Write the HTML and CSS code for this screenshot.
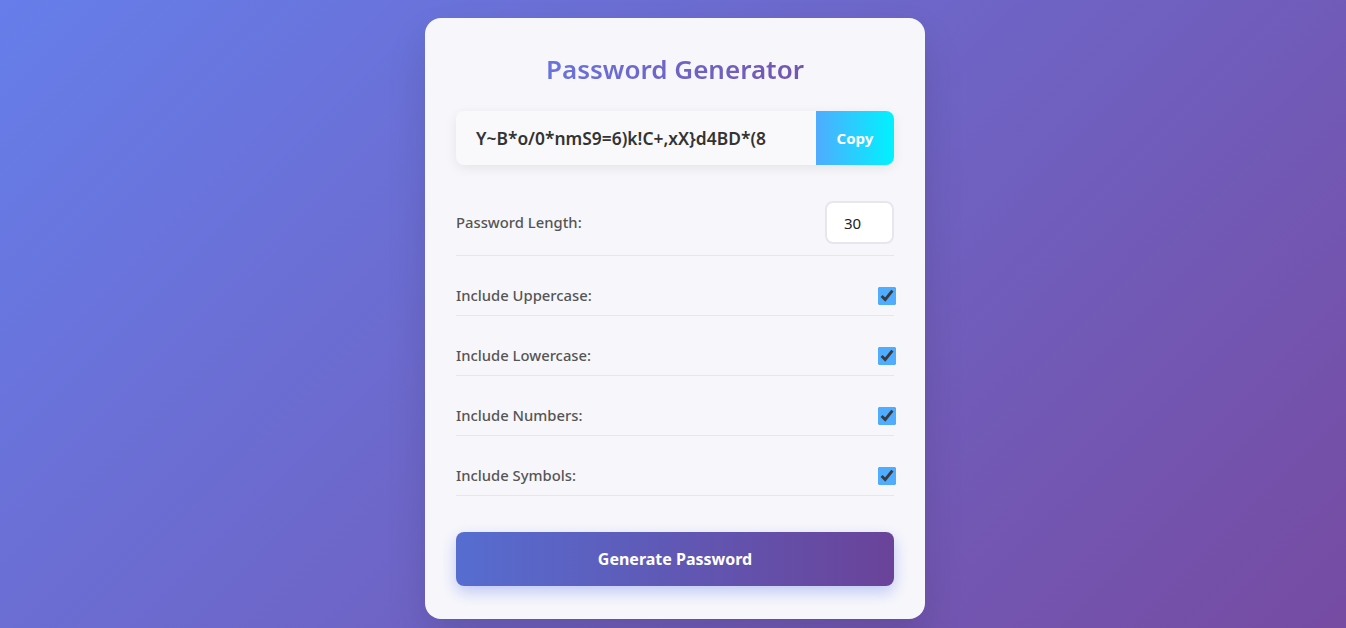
FILE: index.html
```html
<!DOCTYPE html>
<html lang="en">
<head>
<meta charset="utf-8">
<title>Password Generator</title>
<link rel="stylesheet" href="styles.css">
</head>
<body>
<div class="page">
  <div class="card">
    <h1 class="title">Password Generator</h1>
    <div class="result">
      <span class="result-text">Y~B*o/0*nmS9=6)k!C+,xX}d4BD*(8</span>
      <button class="copy-btn">Copy</button>
    </div>
    <div class="settings">
      <div class="row row-length">
        <label class="label">Password Length:</label>
        <input class="length-input" type="number" value="30">
      </div>
      <div class="row">
        <label class="label">Include Uppercase:</label>
        <input class="check" type="checkbox" checked>
      </div>
      <div class="row">
        <label class="label">Include Lowercase:</label>
        <input class="check" type="checkbox" checked>
      </div>
      <div class="row">
        <label class="label">Include Numbers:</label>
        <input class="check" type="checkbox" checked>
      </div>
      <div class="row">
        <label class="label">Include Symbols:</label>
        <input class="check" type="checkbox" checked>
      </div>
    </div>
    <button class="generate-btn">Generate Password</button>
  </div>
</div>
</body>
</html>
```

FILE: styles.css
```css
* { box-sizing: border-box; }
html, body { margin: 0; height: 100%; }
body {
  font-family: "Noto Sans", "Open Sans", sans-serif;
  background: linear-gradient(135deg, #667eea 0%, #764ba2 100%);
  overflow: hidden;
}
.page {
  display: flex;
  justify-content: center;
  padding: 18px 0 0 4px;
}
.card {
  width: 500px;
  background: #f7f7fb;
  border-radius: 16px;
  padding: 30px 31px 33px;
  box-shadow: 0 20px 40px rgba(0, 0, 0, 0.12);
  display: flex;
  flex-direction: column;
}
.title {
  margin: 0 0 19px;
  text-align: center;
  font-size: 26px;
  line-height: 42px;
  padding-bottom: 2px;
  font-weight: 600;
  color: #6a66d0;
  background: linear-gradient(90deg, #667eea, #764ba2);
  -webkit-background-clip: text;
  background-clip: text;
  -webkit-text-fill-color: transparent;
}
.result {
  display: flex;
  align-items: stretch;
  height: 54px;
  flex-shrink: 0;
  background: #f9f9fb;
  border-radius: 8px;
  box-shadow: 0 3px 12px rgba(0, 0, 0, 0.08);
  overflow: hidden;
  margin-bottom: 26px;
}
.result-text {
  flex: 1;
  display: flex;
  align-items: center;
  padding-left: 20px;
  font-size: 17.4px;
  font-weight: 600;
  color: #333;
}
.copy-btn {
  width: 78px;
  border: none;
  background: linear-gradient(90deg, #4facfe 0%, #00f2fe 100%);
  color: #fff;
  font-family: inherit;
  font-size: 15px;
  font-weight: 700;
  padding: 0;
}
.settings { display: flex; flex-direction: column; }
.row {
  display: flex;
  align-items: center;
  justify-content: space-between;
  padding: 10px 0;
  border-bottom: 1px solid #e6e6ee;
  margin-top: 20px;
  flex-shrink: 0;
}
.row-length { margin-top: 0; padding-bottom: 11px; }
.label {
  font-size: 14.8px;
  line-height: 19px;
  font-weight: 500;
  color: #555;
}
.length-input {
  width: 69px;
  height: 43px;
  border: 2px solid #e6e6ee;
  border-radius: 8px;
  background: #fff;
  padding: 0 0 0 17px;
  font-family: inherit;
  font-size: 15px;
  color: #222;
  -moz-appearance: textfield;
}
.length-input::-webkit-inner-spin-button,
.length-input::-webkit-outer-spin-button { -webkit-appearance: none; margin: 0; }
.check {
  width: 18px;
  height: 18px;
  margin: 0 -2px 0 0;
  accent-color: #4facfe;
}
.generate-btn {
  margin-top: 36px;
  height: 54px;
  flex-shrink: 0;
  border: none;
  border-radius: 8px;
  background: linear-gradient(90deg, #566dd0 0%, #6a4399 100%);
  color: #fff;
  font-family: inherit;
  font-size: 16px;
  font-weight: 700;
  box-shadow: 0 6px 16px rgba(102, 126, 234, 0.4);
}
```
